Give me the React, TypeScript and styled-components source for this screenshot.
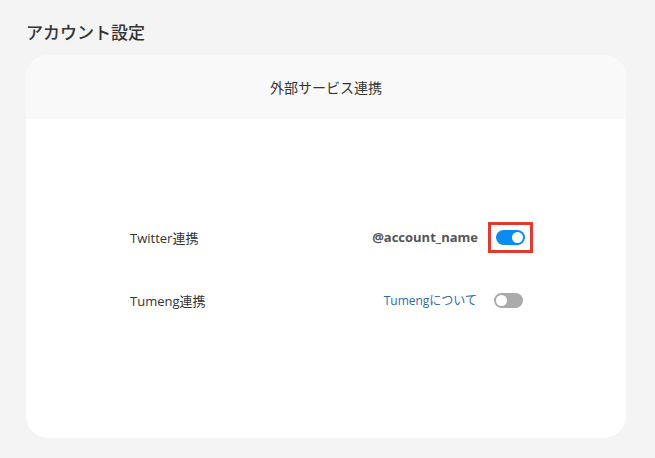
import React from "react";
import styled, { createGlobalStyle } from "styled-components";

const Global = createGlobalStyle`
  html, body { margin: 0; padding: 0; background: #f4f4f4; }
  body { font-family: "Open Sans", "Noto Sans CJK JP", sans-serif; color: #333; }
`;

const Page = styled.div`
  width: 655px;
  height: 458px;
  box-sizing: border-box;
  padding: 20px 29px 20px 26px;
  display: flex;
  flex-direction: column;
  background: #f4f4f4;
`;

const Title = styled.h1`
  margin: 0;
  height: 35px;
  font-size: 17px;
  font-weight: 500;
  line-height: 26px;
  color: #333;
`;

const Card = styled.section`
  width: 600px;
  height: 383px;
  background: #fff;
  border-radius: 22px;
  overflow: hidden;
  display: flex;
  flex-direction: column;
`;

const CardHeader = styled.header`
  height: 64px;
  background: #f9f9f9;
  display: flex;
  align-items: center;
  justify-content: center;
  font-size: 14px;
  color: #333;
`;

const CardBody = styled.div`
  flex: 1;
  padding: 96px 103px 0 104px;
  display: flex;
  flex-direction: column;
  gap: 19px;
`;

const Row = styled.div`
  height: 44px;
  display: flex;
  align-items: center;
  justify-content: space-between;
`;

const Label = styled.span`
  font-size: 13px;
  color: #333;
`;

const Right = styled.div`
  display: flex;
  align-items: center;
  gap: 12px;
`;

const Account = styled.span`
  font-size: 13px;
  font-weight: 700;
  color: #555;
  margin-right: -2px;
`;

const Link = styled.a`
  font-size: 12px;
  color: #2b6ca3;
  text-decoration: none;
  margin-right: 5px;
`;

const Highlight = styled.div`
  border: 3px solid #e03b2e;
  padding: 5px 5px;
  display: flex;
  margin-right: -10px;
`;

const Toggle = styled.span<{ $on: boolean }>`
  position: relative;
  display: inline-block;
  width: 29px;
  height: 15px;
  border-radius: 8px;
  background: ${(p) => (p.$on ? "#0a8cf0" : "#aaaaaa")};
  &::after {
    content: "";
    position: absolute;
    top: 2px;
    left: ${(p) => (p.$on ? "16px" : "2px")};
    width: 11px;
    height: 11px;
    border-radius: 50%;
    background: #fff;
  }
`;

export default function App() {
  return (
    <>
      <Global />
      <Page>
        <Title>アカウント設定</Title>
        <Card>
          <CardHeader>外部サービス連携</CardHeader>
          <CardBody>
            <Row>
              <Label>Twitter連携</Label>
              <Right>
                <Account>@account_name</Account>
                <Highlight>
                  <Toggle $on={true} />
                </Highlight>
              </Right>
            </Row>
            <Row>
              <Label>Tumeng連携</Label>
              <Right>
                <Link href="#">Tumengについて</Link>
                <Toggle $on={false} />
              </Right>
            </Row>
          </CardBody>
        </Card>
      </Page>
    </>
  );
}
